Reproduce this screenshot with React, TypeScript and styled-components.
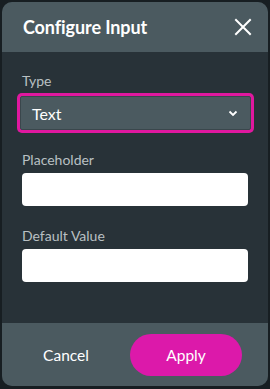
import styled, { createGlobalStyle } from 'styled-components'

const GlobalStyle = createGlobalStyle`
  html, body {
    margin: 0;
    padding: 0;
    background: #171e22;
    font-family: Lato, "Open Sans", sans-serif;
  }
`

const Backdrop = styled.div`
  width: 270px;
  height: 389px;
  padding: 2px;
  box-sizing: border-box;
`

const Dialog = styled.div`
  width: 266px;
  height: 384px;
  border-radius: 10px;
  overflow: hidden;
  display: flex;
  flex-direction: column;
  background: #283238;
`

const Header = styled.div`
  height: 50px;
  background: #4b5a60;
  display: flex;
  align-items: center;
  justify-content: space-between;
  padding: 0 16px 0 21px;
  flex-shrink: 0;
`

const Title = styled.h2`
  margin: 0;
  font-size: 18px;
  font-weight: 700;
  color: #ffffff;
  letter-spacing: -0.1px;
`

const CloseButton = styled.button`
  border: 0;
  background: none;
  padding: 0;
  width: 18px;
  height: 18px;
  display: flex;
  cursor: pointer;
`

const Body = styled.div`
  flex: 1;
  padding: 20px 20px 0 20px;
  display: flex;
  flex-direction: column;
`

const Field = styled.div`
  display: flex;
  flex-direction: column;
  margin-bottom: 21px;
`

const Label = styled.label`
  font-size: 14px;
  color: #b9c0c3;
  line-height: 17px;
  margin-bottom: 5px;
`

const Select = styled.div`
  height: 34px;
  margin: 2px -3px 0 -2px;
  background: #4b5a60;
  border: 1px solid #3a474c;
  box-sizing: border-box;
  box-shadow: 0 0 0 3px #e0189f;
  border-radius: 2px;
  display: flex;
  align-items: center;
  justify-content: space-between;
  padding: 0 12px 0 11px;
  color: #ffffff;
  font-size: 16px;
`

const TextInput = styled.input`
  height: 33px;
  border: 0;
  border-radius: 4px;
  background: #ffffff;
  box-sizing: border-box;
  padding: 0 10px;
  font-family: inherit;
  font-size: 14px;
  outline: none;
`

const Footer = styled.div`
  height: 63px;
  background: #4b5a60;
  display: flex;
  align-items: center;
  padding: 0 26px 0 20px;
  flex-shrink: 0;
`

const GhostButton = styled.button`
  border: 0;
  background: none;
  color: #ffffff;
  font-family: inherit;
  font-size: 15.5px;
  width: 88px;
  height: 42px;
  cursor: pointer;
`

const PrimaryButton = styled.button`
  margin-left: auto;
  border: 0;
  background: #dc19aa;
  color: #ffffff;
  font-family: inherit;
  font-size: 15.5px;
  width: 112px;
  height: 42px;
  border-radius: 21px;
  cursor: pointer;
`

const App = () => (
  <>
    <GlobalStyle />
    <Backdrop>
      <Dialog>
        <Header>
          <Title>Configure Input</Title>
          <CloseButton aria-label="close">
            <svg width="18" height="18" viewBox="0 0 18 18">
              <path d="M2 2 L16 16 M16 2 L2 16" stroke="#fff" strokeWidth="2" strokeLinecap="square" />
            </svg>
          </CloseButton>
        </Header>
        <Body>
          <Field>
            <Label>Type</Label>
            <Select>
              <span>Text</span>
              <svg width="10" height="7" viewBox="0 0 10 7">
                <path d="M1.5 1.5 L5 5 L8.5 1.5" stroke="#fff" strokeWidth="1.8" fill="none" />
              </svg>
            </Select>
          </Field>
          <Field>
            <Label>Placeholder</Label>
            <TextInput />
          </Field>
          <Field>
            <Label>Default Value</Label>
            <TextInput />
          </Field>
        </Body>
        <Footer>
          <GhostButton>Cancel</GhostButton>
          <PrimaryButton>Apply</PrimaryButton>
        </Footer>
      </Dialog>
    </Backdrop>
  </>
)

export default App
